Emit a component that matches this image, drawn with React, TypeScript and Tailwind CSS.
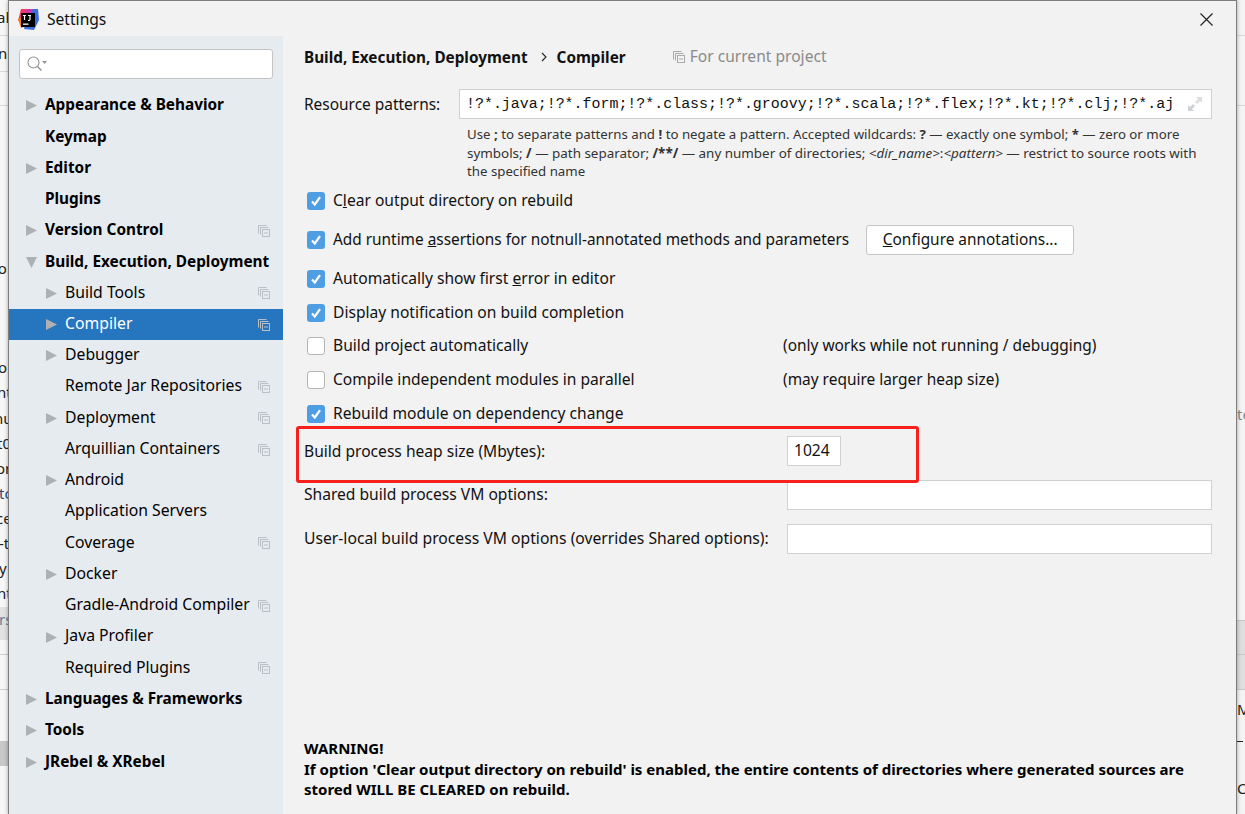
const font = "font-['Noto_Sans','Open_Sans',sans-serif]";

type NavItem = { label: string; level: 0 | 1; arrow?: "right" | "down"; copy?: boolean; active?: boolean };

const navItems: NavItem[] = [
  { label: "Appearance & Behavior", level: 0, arrow: "right" },
  { label: "Keymap", level: 0 },
  { label: "Editor", level: 0, arrow: "right" },
  { label: "Plugins", level: 0 },
  { label: "Version Control", level: 0, arrow: "right", copy: true },
  { label: "Build, Execution, Deployment", level: 0, arrow: "down" },
  { label: "Build Tools", level: 1, arrow: "right", copy: true },
  { label: "Compiler", level: 1, arrow: "right", copy: true, active: true },
  { label: "Debugger", level: 1, arrow: "right" },
  { label: "Remote Jar Repositories", level: 1, copy: true },
  { label: "Deployment", level: 1, arrow: "right", copy: true },
  { label: "Arquillian Containers", level: 1, copy: true },
  { label: "Android", level: 1, arrow: "right" },
  { label: "Application Servers", level: 1 },
  { label: "Coverage", level: 1, copy: true },
  { label: "Docker", level: 1, arrow: "right" },
  { label: "Gradle-Android Compiler", level: 1, copy: true },
  { label: "Java Profiler", level: 1, arrow: "right" },
  { label: "Required Plugins", level: 1, copy: true },
  { label: "Languages & Frameworks", level: 0, arrow: "right" },
  { label: "Tools", level: 0, arrow: "right" },
  { label: "JRebel & XRebel", level: 0, arrow: "right" },
];

const CopyIcon = ({ color = "#b9bfc4" }: { color?: string }) => (
  <svg width="12" height="12" viewBox="0 0 12 12" fill="none" stroke={color} strokeWidth="1">
    <path d="M.5 8.500V.5h8" />
    <path d="M2.500 9.500V2.500h8" />
    <rect x="4.500" y="4.500" width="7" height="7" />
    <path d="M6 8h4" />
  </svg>
);

const Arrow = ({ dir }: { dir: "right" | "down" }) => (
  <svg width="11" height="11" viewBox="0 0 11 11" fill="#aeb1b3">
    {dir === "right" ? <path d="M0 0l11 5.500L0 11z" /> : <path d="M0 0h11L5.500 11z" />}
  </svg>
);

const Check = ({ on }: { on: boolean }) =>
  on ? (
    <span className="flex h-[18px] w-[18px] shrink-0 items-center justify-center rounded-[3px] bg-[#4f9ee3]">
      <svg width="12" height="12" viewBox="0 0 12 12" fill="none" stroke="#fff" strokeWidth="2.200">
        <path d="M2 6.500l2.800 3L10 2.200" />
      </svg>
    </span>
  ) : (
    <span className="h-[18px] w-[18px] shrink-0 rounded-[3px] border border-[#b5b5b5] bg-white" />
  );

const Logo = () => (
  <svg width="21" height="21" viewBox="0 0 21 21">
    <path d="M3 0h9l-3 9-9 3z" fill="#f0386b" />
    <path d="M0 10l6-3 2 10-5 2z" fill="#f97a12" />
    <path d="M11 0h9l1 11-5 10-10-1z" fill="#3b6fe0" />
    <path d="M9 0h6l-3 7-5-1z" fill="#c93ab0" />
    <rect x="3" y="4" width="14" height="14" fill="#000" />
    <path d="M5 6.500h3M6.500 6.500V11M10 6.500h3M12 6.500V10.500q0 1-2 1" stroke="#fff" strokeWidth="1.200" fill="none" />
    <rect x="5" y="14.500" width="5.500" height="1.300" fill="#fff" />
  </svg>
);

const SearchIcon = () => (
  <svg width="20" height="16" viewBox="0 0 20 16" fill="none">
    <circle cx="6.500" cy="6.500" r="5.500" stroke="#8f9396" strokeWidth="1.100" />
    <path d="M10.500 10.500l4 4" stroke="#8f9396" strokeWidth="1.400" />
    <path d="M15 5h5l-2.500 3z" fill="#8f9396" />
  </svg>
);

const ExpandIcon = () => (
  <svg width="16" height="16" viewBox="0 0 16 16" fill="#cfd2d4">
    <path d="M9 1h6v6l-2-2-3 3-2-2 3-3z" fill="#dcdee0" />
    <path d="M7 15H1V9l2 2 3-3 2 2-3 3z" />
  </svg>
);

const Nav = ({ item }: { item: NavItem }) => (
  <div className={`flex h-[31.25px] items-center pr-[13px] ${item.active ? "bg-[#2675bf] text-white" : "text-black"}`}>
    <span className={`flex shrink-0 justify-start ${item.level === 0 ? "ml-[17px] w-[19px]" : "ml-[37px] w-[19px]"}`}>
      {item.arrow && <Arrow dir={item.arrow} />}
    </span>
    <span className={`flex-1 whitespace-nowrap pb-[2px] ${item.level === 0 ? "text-[15.35px] font-bold" : "text-[15.75px]"}`}>{item.label}</span>
    {item.copy && <CopyIcon />}
  </div>
);

const CheckRow = ({ on, children, note, size = "text-[15.6px]", className = "" }: { on: boolean; children: React.ReactNode; note?: string; size?: string; className?: string }) => (
  <div className={`flex items-center ${size} ${className}`}>
    <span className="ml-[3px] mr-[7px] flex w-[19px]"><Check on={on} /></span>
    <span className="whitespace-nowrap">{children}</span>
    {note && <span className="absolute left-[500px] whitespace-nowrap text-[15.45px]">{note}</span>}
  </div>
);

const StripText = ({ y, text, left = 0, color = "#222" }: { y: number; text: string; left?: number; color?: string }) => (
  <span className="absolute whitespace-nowrap text-[15px] leading-none" style={{ top: y, left, color }}>{text}</span>
);

export default function App() {
  return (
    <div className={`relative flex h-[814px] w-[1245px] overflow-hidden bg-white text-[#111] ${font}`}>
      <div className="relative w-[8px] shrink-0 overflow-hidden bg-[#f7f7f7]">
        <StripText y={10} text="al" left={-3} />
        <StripText y={46} text="n" left={-2} />
        <StripText y={261} text="Lo" left={-10} />
        <StripText y={360} text="o" left={-2} />
        <StripText y={385} text="nt" left={-3} />
        <StripText y={411} text="nu" left={-6} />
        <StripText y={436} text="t0" left={-3} />
        <StripText y={461} text="or" left={-4} />
        <StripText y={486} text="tc" left={-1} color="#2a4a7a" />
        <StripText y={511} text="ce" left={-4} />
        <StripText y={536} text="-t" left={-1} />
        <StripText y={561} text="y" left={-1} />
        <StripText y={586} text="nt" left={-3} />
        <div className="absolute left-0 top-[35px] h-px w-full bg-[#d8d8d8]" />
        <div className="absolute left-0 top-[71px] h-px w-full bg-[#d8d8d8]" />
        <div className="absolute left-0 top-[105px] h-px w-full bg-[#d8d8d8]" />
        <div className="absolute left-0 top-[607px] h-[33px] w-full bg-[#e2e2e2]" />
        <StripText y={612} text="rs" left={-1} color="#5f7f9f" />
        <div className="absolute left-0 top-[654px] h-px w-full bg-[#d0d0d0]" />
        <div className="absolute left-0 top-[689px] h-px w-full bg-[#d0d0d0]" />
        <div className="absolute left-0 top-[741px] h-[25px] w-full bg-[#c8c8c8]" />
      </div>

      <div className="relative z-10 flex flex-1 flex-col border-x border-t border-[#7d7d7d] bg-[#f2f2f2] shadow-[0_0_4px_rgba(0,0,0,0.35)]">
        <div className="relative flex h-[35px] shrink-0 items-center pl-[9px] pt-[2px]">
          <Logo />
          <span className="ml-[8px] text-[15.6px]">Settings</span>
          <svg className="absolute right-[23px] top-[12px]" width="13" height="13" viewBox="0 0 13 13" stroke="#222" strokeWidth="1.200">
            <path d="M.5.500l12 12M12.500.500l-12 12" />
          </svg>
        </div>

        <div className="flex min-h-0 flex-1">
          <div className="w-[274px] shrink-0 bg-[#e6ebf0]">
            <div className="mx-[10px] mt-[13px] flex h-[30px] items-center rounded-[3px] border border-[#c4c4c4] bg-white pl-[7px]">
              <SearchIcon />
            </div>
            <div className="mt-[11.2px]">
              {navItems.map((item) => <Nav key={item.label} item={item} />)}
            </div>
          </div>

          <div className="relative flex-1 pl-[21px] pr-[23px]">
            <div className="mt-[9px] flex h-[24px] items-center whitespace-nowrap">
              <span className="text-[15.3px] font-bold">Build, Execution, Deployment</span>
              <svg className="ml-[13px] mr-[9px]" width="7" height="10" viewBox="0 0 7 10" fill="none" stroke="#222" strokeWidth="1.100"><path d="M1 1l4 4-4 4" /></svg>
              <span className="text-[15.3px] font-bold">Compiler</span>
              <span className="ml-[47px] mr-[5px] flex"><CopyIcon color="#a9a9a9" /></span>
              <span className="text-[15.6px] text-[#8a8a8a]">For current project</span>
            </div>

            <div className="mt-[20px] flex h-[30px] items-center">
              <span className="w-[155px] whitespace-nowrap pt-[2px] text-[15.45px]">Resource patterns:</span>
              <div className="mr-px flex h-[30px] flex-1 items-center justify-between border border-[#d0d0d0] bg-white pl-[6px] pr-[8px]">
                <span className="whitespace-nowrap font-['Liberation_Mono',monospace] text-[14.95px] text-[#111]">!?*.java;!?*.form;!?*.class;!?*.groovy;!?*.scala;!?*.flex;!?*.kt;!?*.clj;!?*.aj</span>
                <ExpandIcon />
              </div>
            </div>

            <div className="ml-[163px] mt-[6px] text-[13.25px] leading-[18.6px] text-[#333]">
              <div className="whitespace-nowrap">Use <b>;</b> to separate patterns and <b>!</b> to negate a pattern. Accepted wildcards: <b>?</b> — exactly one symbol; <b>*</b> — zero or more</div>
              <div className="whitespace-nowrap text-[13.42px]">symbols; <b>/</b> — path separator; <b>/**/</b> — any number of directories; <i>&lt;dir_name&gt;</i>:<i>&lt;pattern&gt;</i> — restrict to source roots with</div>
              <div className="whitespace-nowrap">the specified name</div>
            </div>

            <CheckRow on className="mt-[8px] h-[24px]">C<u>l</u>ear output directory on rebuild</CheckRow>
            <div className="mt-[12px] flex h-[30px] items-center">
              <CheckRow on size="text-[15.38px]">Add runtime <u>a</u>ssertions for notnull-annotated methods and parameters</CheckRow>
              <button className="ml-[17px] h-[30px] w-[208px] whitespace-nowrap rounded-[3px] border border-[#c4c4c4] bg-white text-[15.4px]"><u>C</u>onfigure annotations...</button>
            </div>
            <CheckRow on className="mt-[12px] h-[24px]">Automatically show first <u>e</u>rror in editor</CheckRow>
            <CheckRow on className="mt-[10px] h-[24px]">Display notification on build completion</CheckRow>
            <CheckRow on={false} note="(only works while not running / debugging)" className="mt-[9px] h-[24px]">Build project automatically</CheckRow>
            <CheckRow on={false} note="(may require larger heap size)" className="mt-[10px] h-[24px]">Compile independent modules in parallel</CheckRow>
            <CheckRow on className="mt-[10px] h-[24px]">Rebuild module on dependency change</CheckRow>

            <div className="relative mt-[10px] flex h-[30px] items-center text-[15.6px]">
              <span className="w-[483px] whitespace-nowrap pt-[2px]">Build process heap size (Mbytes):</span>
              <div className="flex h-[30px] w-[54px] items-center border border-[#d0d0d0] bg-white pl-[6px]">1024</div>
              <div className="absolute -left-[8px] -top-[10px] h-[57px] w-[623px] rounded-[3px] border-[3px] border-[#f8201c]" />
            </div>
            <div className="mt-[14px] flex h-[30px] items-center text-[15.6px]">
              <span className="w-[483px] whitespace-nowrap">Shared build process VM options:</span>
              <div className="mr-px h-[30px] flex-1 border border-[#d0d0d0] bg-white" />
            </div>
            <div className="mt-[14px] flex h-[30px] items-center text-[15.7px]">
              <span className="w-[483px] whitespace-nowrap">User-local build process VM options (overrides Shared options):</span>
              <div className="mr-px h-[30px] flex-1 border border-[#d0d0d0] bg-white" />
            </div>

            <div className="mt-[184px] text-[15px] font-bold leading-[20.8px] text-black">
              <div>WARNING!</div>
              <div className="whitespace-nowrap">If option 'Clear output directory on rebuild' is enabled, the entire contents of directories where generated sources are</div>
              <div className="whitespace-nowrap">stored WILL BE CLEARED on rebuild.</div>
            </div>
          </div>
        </div>
      </div>

      <div className="relative w-[8px] shrink-0 overflow-hidden bg-[#f4f4f4]">
        <div className="absolute left-0 top-[35px] h-px w-full bg-[#d8d8d8]" />
        <div className="absolute left-0 top-[105px] h-px w-full bg-[#d8d8d8]" />
        <div className="absolute left-0 top-[620px] h-[70px] w-full bg-[#dedede]" />
        <div className="absolute left-0 top-[620px] h-px w-full bg-[#c8c8c8]" />
        <div className="absolute left-0 top-[654px] h-px w-full bg-[#c8c8c8]" />
        <div className="absolute left-0 top-[689px] h-px w-full bg-[#c8c8c8]" />
        <div className="absolute left-0 top-[741px] h-px w-[6px] bg-[#222]" />
        <StripText y={407} text="te" left={0} color="#888" />
        <StripText y={702} text="M" left={0} />
        <StripText y={781} text="C" left={0} />
      </div>
    </div>
  );
}
